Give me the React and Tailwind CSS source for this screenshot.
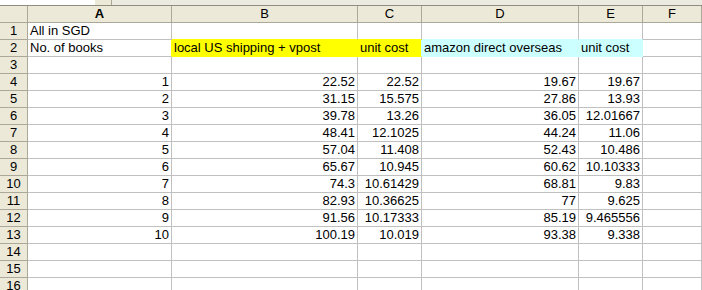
import React from "react";

const B = ["22.52","31.15","39.78","48.41","57.04","65.67","74.3","82.93","91.56","100.19"];
const C = ["22.52","15.575","13.26","12.1025","11.408","10.945","10.61429","10.36625","10.17333","10.019"];
const D = ["19.67","27.86","36.05","44.24","52.43","60.62","68.81","77","85.19","93.38"];
const E = ["19.67","13.93","12.01667","11.06","10.486","10.10333","9.83","9.625","9.465556","9.338"];

const grid = "grid grid-cols-[28px_144px_186px_64px_157px_64px_1fr]";
const cell = "h-[17px] border-r border-b border-[#c0c0c0] px-[2px] leading-[16px] whitespace-nowrap overflow-hidden";
const hdr = "h-[17px] border-r border-b border-[#aca899] bg-[#ece9d8] leading-[16px] text-center";

function Row({ n, cells }) {
  return (
    <>
      <div className={hdr}>{n}</div>
      {cells.map((c, i) => (
        <div key={i} className={`${cell} ${c.cls || ""}`}>{c.t || ""}</div>
      ))}
    </>
  );
}

export default function App() {
  const rows = [];
  rows.push(
    <Row key={1} n={1} cells={[
      { t: "All in SGD" },
      { cls: "border-b-[#ffff00]" },
      { cls: "border-b-[#ffff00]" },
      { cls: "border-b-[#ccffff]" },
      { cls: "border-b-[#ccffff]" },
      {},
    ]} />
  );
  rows.push(
    <Row key={2} n={2} cells={[
      { t: "No. of books", cls: "border-r-[#ffff00]" },
      { t: "local US shipping + vpost", cls: "bg-[#ffff00] border-r-[#ffff00] border-b-[#ffff00]" },
      { t: "unit cost", cls: "bg-[#ffff00] border-r-[#ccffff] border-b-[#ffff00]" },
      { t: "amazon direct overseas", cls: "bg-[#ccffff] border-r-[#ccffff] border-b-[#ccffff]" },
      { t: "unit cost", cls: "bg-[#ccffff] border-r-[#ccffff] border-b-[#ccffff]" },
      {},
    ]} />
  );
  rows.push(<Row key={3} n={3} cells={[{}, {}, {}, {}, {}, {}]} />);
  for (let i = 0; i < 10; i++) {
    rows.push(
      <Row key={4 + i} n={4 + i} cells={[
        { t: String(i + 1), cls: "text-right" },
        { t: B[i], cls: "text-right" },
        { t: C[i], cls: "text-right" },
        { t: D[i], cls: "text-right" },
        { t: E[i], cls: "text-right" },
        {},
      ]} />
    );
  }
  for (let n = 14; n <= 16; n++) rows.push(<Row key={n} n={n} cells={[{}, {}, {}, {}, {}, {}]} />);

  return (
    <div className="w-[702px] h-[290px] overflow-hidden bg-white text-[13px] text-black font-['Liberation_Sans',Arial,sans-serif]">
      <div className="flex h-[5px]">
        <div className="w-[95px] bg-white" />
        <div className="w-[17px] bg-[#ece9d8] border-r border-[#aca899]" />
        <div className="flex-1 bg-[#ecebe2]" />
      </div>
      <div className="h-[1px] bg-[#8f8c80]" />
      <div className={grid}>
        <div className={hdr} />
        <div className={`${hdr} font-bold`}>A</div>
        <div className={hdr}>B</div>
        <div className={hdr}>C</div>
        <div className={hdr}>D</div>
        <div className={hdr}>E</div>
        <div className={hdr}>F</div>
        {rows}
      </div>
    </div>
  );
}
